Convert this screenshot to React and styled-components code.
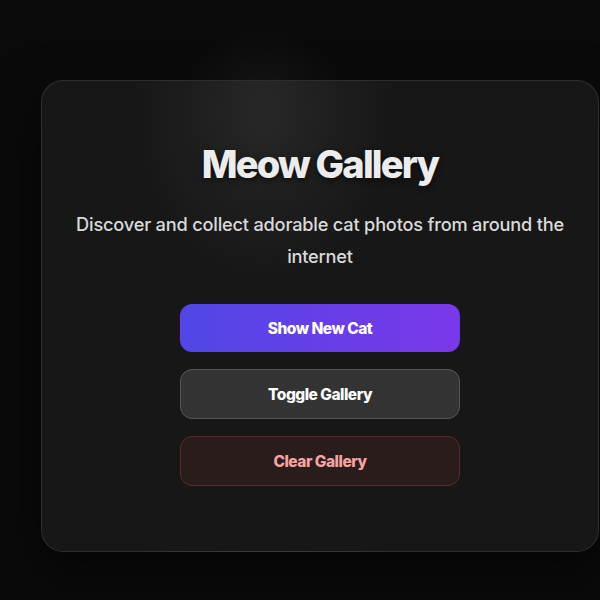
import React from "react";
import styled, { createGlobalStyle } from "styled-components";

const Global = createGlobalStyle`
  html, body {
    margin: 0;
    padding: 0;
    background: #0a0a0a;
  }
  body {
    font-family: Inter, "Noto Sans", sans-serif;
    color: #f1f1f1;
    min-height: 600px;
    overflow: hidden;
  }
`;

const Page = styled.div`
  position: relative;
  width: 600px;
  height: 600px;
  padding: 80px 1px 0 41px;
  box-sizing: border-box;
  background:
    radial-gradient(circle at 263px 115px, rgba(255,255,255,0.07) 0px, rgba(255,255,255,0.03) 45px, rgba(255,255,255,0) 90px),
    #0a0a0a;
`;

const Card = styled.div`
  width: 558px;
  height: 472px;
  box-sizing: border-box;
  border-radius: 22px;
  border: 1px solid rgba(255, 255, 255, 0.1);
  background:
    radial-gradient(ellipse 130px 170px at 222px 30px, rgba(255,255,255,0.07), rgba(255,255,255,0) 100%),
    #171717;
  box-shadow: 0 20px 50px rgba(0, 0, 0, 0.5);
  display: flex;
  flex-direction: column;
  align-items: center;
  padding: 61px 20px 0;
`;

const Title = styled.h1`
  margin: 0;
  font-family: Inter, sans-serif;
  font-size: 38px;
  font-weight: 800;
  letter-spacing: -1.8px;
  line-height: 44px;
  color: #ececec;
  text-shadow: 0 2px 6px rgba(0, 0, 0, 0.6);
`;

const Subtitle = styled.p`
  margin: 22px 0 0;
  max-width: 510px;
  text-align: center;
  font-family: Inter, sans-serif;
  font-size: 18.2px;
  font-weight: 500;
  letter-spacing: -0.2px;
  line-height: 32px;
  color: #dadada;
`;

const Buttons = styled.div`
  margin-top: 32px;
  display: flex;
  flex-direction: column;
  gap: 17px;
  width: 280px;
`;

const Button = styled.button`
  height: ${(p) => (p.$variant === "primary" ? "48px" : "50px")};
  border-radius: 12px;
  font-family: Inter, sans-serif;
  font-size: 15.5px;
  font-weight: 800;
  letter-spacing: -0.5px;
  cursor: pointer;
  border: 1px solid transparent;
  ${(p) =>
    p.$variant === "primary"
      ? `
    background: linear-gradient(90deg, #5047e6 0%, #6a3de9 60%, #7a38ea 100%);
    color: #ffffff;
  `
      : p.$variant === "danger"
      ? `
    background: #2b1c1c;
    border-color: #5a2a2b;
    color: #f4a3a3;
  `
      : `
    background: #333333;
    border-color: #555555;
    color: #ffffff;
  `}
`;

export default function App() {
  return (
    <>
      <Global />
      <Page>
        <Card>
          <Title>Meow Gallery</Title>
          <Subtitle>
            Discover and collect adorable cat photos from around the internet
          </Subtitle>
          <Buttons>
            <Button $variant="primary">Show New Cat</Button>
            <Button>Toggle Gallery</Button>
            <Button $variant="danger">Clear Gallery</Button>
          </Buttons>
        </Card>
      </Page>
    </>
  );
}
